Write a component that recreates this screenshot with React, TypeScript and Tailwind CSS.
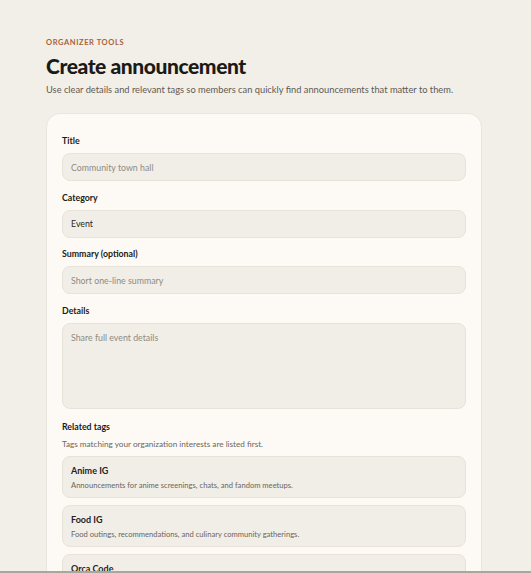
import { useState } from 'react'

const tags = [
  { name: 'Anime IG', description: 'Announcements for anime screenings, chats, and fandom meetups.' },
  { name: 'Food IG', description: 'Food outings, recommendations, and culinary community gatherings.' },
  { name: 'Orca Code', description: 'Coding sessions, hackathons, and project showcases.' },
]

const inputClass =
  'w-full h-[28px] rounded-[8px] border border-[#e8e3d9] bg-[#f1eee7] px-2 text-[8.8px] text-[#2a2622] placeholder:text-[#8f8a82] outline-none'

export default function App() {
  const [title, setTitle] = useState('')
  const [summary, setSummary] = useState('')
  const [details, setDetails] = useState('')

  return (
    <div className="min-h-screen bg-[#f2efe8] text-[#1c1a17]" style={{ fontFamily: 'Lato, "Noto Sans", sans-serif' }}>
      <div className="w-[436px] ml-[46px] pt-[37px]">
        <p className="text-[7.5px] font-bold uppercase leading-[12px] tracking-[0.08em] text-[#a8623a]">Organizer tools</p>
        <h1 className="mt-[4px] text-[21px] font-black leading-[26px] tracking-[-0.02em]">Create announcement</h1>
        <p className="mt-[4px] text-[9.3px] leading-[14px] text-[#5f5a53]">
          Use clear details and relevant tags so members can quickly find announcements that matter to them.
        </p>

        <div className="mt-[16px] rounded-t-[14px] border border-[#ebe6dc] bg-[#fdfaf5] px-[15px] pt-[20px] pb-6">
          <div className="flex flex-col gap-[9.5px]">
            <label className="flex flex-col gap-[5px]">
              <span className="text-[8.8px] font-bold leading-[14px]">Title</span>
              <input
                className={inputClass}
                placeholder="Community town hall"
                value={title}
                onChange={e => setTitle(e.target.value)}
              />
            </label>

            <label className="flex flex-col gap-[5px]">
              <span className="text-[8.8px] font-bold leading-[14px]">Category</span>
              <div className={`${inputClass} flex items-center`}>Event</div>
            </label>

            <label className="flex flex-col gap-[5px]">
              <span className="text-[8.8px] font-bold leading-[14px]">Summary (optional)</span>
              <input
                className={inputClass}
                placeholder="Short one-line summary"
                value={summary}
                onChange={e => setSummary(e.target.value)}
              />
            </label>

            <label className="flex flex-col gap-[5px]">
              <span className="text-[8.8px] font-bold leading-[14px]">Details</span>
              <textarea
                className="h-[86px] w-full resize-none rounded-[8px] border border-[#e8e3d9] bg-[#f1eee7] px-2 py-[7px] text-[8.8px] text-[#2a2622] placeholder:text-[#8f8a82] outline-none"
                placeholder="Share full event details"
                value={details}
                onChange={e => setDetails(e.target.value)}
              />
            </label>

            {/* Related tags */}
            <div className="mt-[2px] flex flex-col">
              <span className="text-[8.8px] font-bold leading-[14px]">Related tags</span>
              <span className="mt-[3px] text-[8.2px] leading-[14px] text-[#6b655d]">
                Tags matching your organization interests are listed first.
              </span>
              <div className="mt-[5px] flex flex-col gap-[7px]">
                {tags.map(tag => (
                  <div key={tag.name} className="rounded-[8px] border border-[#e8e3d9] bg-[#f1eee7] px-2 pt-[7px] pb-[6px]">
                    <div className="text-[9px] font-bold leading-[14px] text-[#26221e]">{tag.name}</div>
                    <div className="mt-[1px] text-[7.6px] leading-[12px] text-[#6b655d]">{tag.description}</div>
                  </div>
                ))}
              </div>
            </div>
          </div>
        </div>
      </div>
      <div className="fixed inset-x-0 bottom-0 h-[2px] bg-[#a9a6a0]" />
    </div>
  )
}
